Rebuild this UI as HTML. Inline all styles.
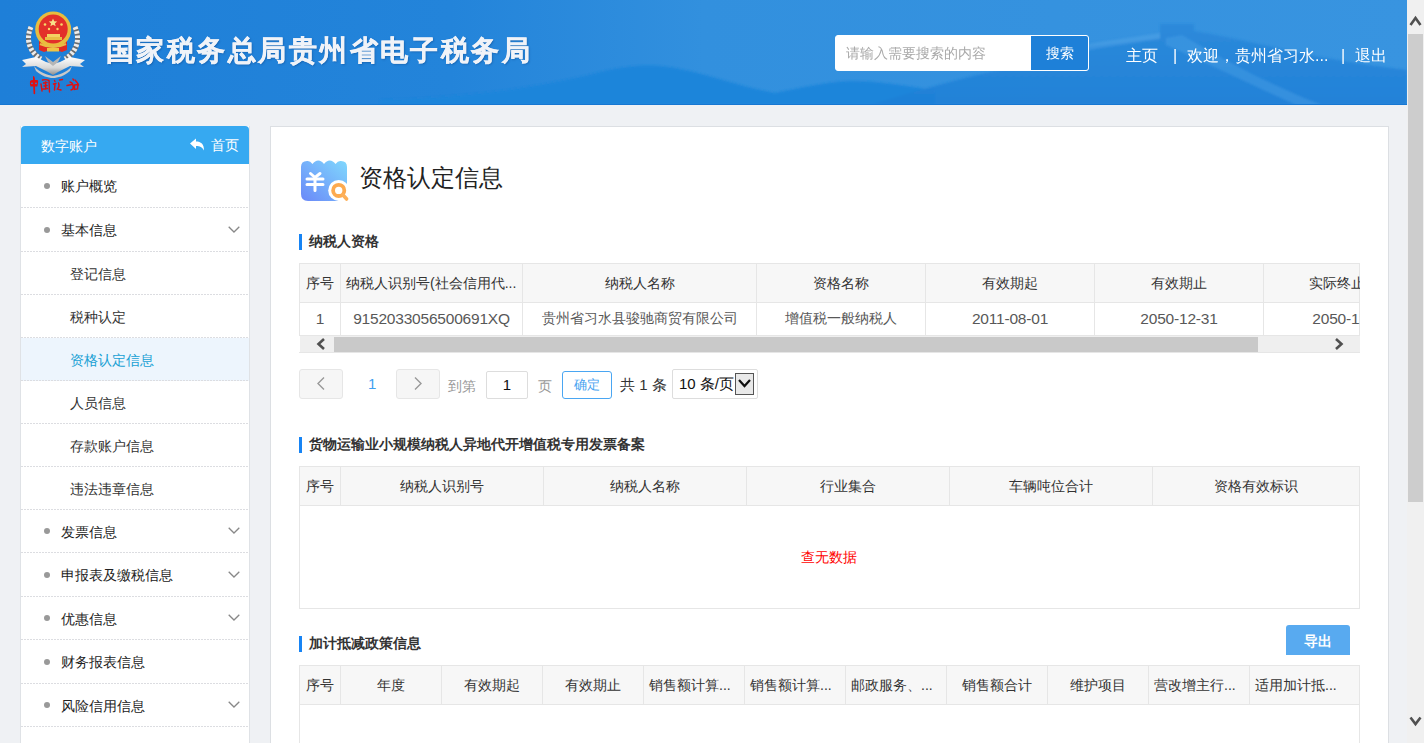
<!DOCTYPE html><html><head><meta charset="utf-8"><style>
*{box-sizing:border-box;margin:0;padding:0}
html,body{width:1424px;height:743px;overflow:hidden}
body{background:#eff1f4;font-family:"Liberation Sans",sans-serif;color:#333;position:relative}
.abs{position:absolute}
.hl{left:0;height:1px;background:#e6e6e6}
.vl{top:0;width:1px;background:#e6e6e6}
.th,.td{font-size:14px;color:#333;text-align:center;white-space:nowrap;overflow:hidden}
.td{color:#585858}
#hdr{left:0;top:0;width:1407px;height:105px;background:linear-gradient(90deg,#1e7ed8 0%,#2283dc 35%,#3592e2 70%,#2f8de0 100%);overflow:hidden}
#title{left:106px;top:32px;-webkit-text-stroke:.4px #f0f3f8;font-size:28px;font-weight:bold;color:#f0f3f8;letter-spacing:2.45px;white-space:nowrap;text-shadow:1px 1px 2px rgba(0,40,100,.35)}
.nav{top:47px;font-size:16px;color:#fff;white-space:nowrap;line-height:18px}
.mi{position:absolute;left:21px;width:228px;font-size:14px;color:#222}
.mi:after{content:'';position:absolute;left:0;bottom:0;width:228px;height:1px;background:repeating-linear-gradient(90deg,#dcdde1 0 2px,transparent 2px 3px)}
.mi .t{position:absolute;white-space:nowrap}
.dot{position:absolute;left:23px;width:6px;height:6px;border-radius:50%;background:#999}
.sec{position:absolute;left:309px;font-size:14px;font-weight:bold;color:#333;white-space:nowrap;line-height:16px}
.bar{position:absolute;left:299px;width:3px;height:16px;background:#1784f4}
</style></head><body>
<div id="hdr" class="abs">
<svg class="abs" style="left:0;top:0" width="1407" height="105" viewBox="0 0 1407 105" preserveAspectRatio="none">
<defs>
<linearGradient id="hg" x1="0" y1="0" x2="1" y2="0"><stop offset="0" stop-color="#1e7fd8"/><stop offset=".32" stop-color="#2384da"/><stop offset=".5" stop-color="#3290de"/><stop offset="1" stop-color="#3894e0"/></linearGradient>
<filter id="bl" x="-5%" y="-20%" width="110%" height="140%"><feGaussianBlur stdDeviation="0.9"/></filter>
<linearGradient id="mg" x1="0" y1="0" x2="0" y2="1"><stop offset="0" stop-color="#2a88da"/><stop offset="1" stop-color="#1f7fd6"/></linearGradient>
</defs>
<rect width="1407" height="105" fill="url(#hg)"/>
<g filter="url(#bl)"><path d="M380 104 L380 100 C460 98 540 88 600 72 C625 66 640 65 660 66 C700 70 735 86 775 93 C800 88 825 82 850 81 C880 81 905 86 935 90 L935 105 L380 105Z" fill="#1f85da"/>
<path d="M870 105 C920 90 960 78 1000 70 C1040 60 1060 50 1090 46 L1160 38 L1160 24 L1194 24 L1194 31 C1230 37 1280 49 1320 57 C1360 64 1390 68 1407 70 L1407 105Z" fill="url(#mg)" opacity=".85"/>
<path d="M1040 56 C1060 50 1080 46 1100 42 L1160 33 L1160 39 L1100 48 C1080 52 1060 56 1045 60Z" fill="#5eabea" opacity=".35"/>
<path d="M1166 38 L1182 35 C1220 58 1270 85 1322 105 L1296 105 C1250 84 1205 62 1166 45Z" fill="#5eabea" opacity=".3"/>
</g>
<rect x="0" y="104" width="1407" height="1" fill="#1677d2"/>
</svg>
</div>
<svg class="abs" style="left:0;top:0" width="100" height="100" viewBox="0 0 100 100">
<defs><linearGradient id="sg" x1="0" y1="0" x2="0" y2="1"><stop offset="0" stop-color="#ffffff"/><stop offset=".6" stop-color="#d8d8d8"/><stop offset="1" stop-color="#8d8d8d"/></linearGradient></defs>
<path d="M31 27 C26 38 28 51 41 59" fill="none" stroke="#6d6d6d" stroke-width="5"/>
<path d="M31 27 C26 38 28 51 41 59" fill="none" stroke="#ececec" stroke-width="5" stroke-dasharray="2.6 1.8"/>
<path d="M75 27 C80 38 78 51 65 59" fill="none" stroke="#6d6d6d" stroke-width="5"/>
<path d="M75 27 C80 38 78 51 65 59" fill="none" stroke="#ececec" stroke-width="5" stroke-dasharray="2.6 1.8"/>
<path d="M39 41 L67 41 L67 50 L62 52 L53 49 L44 52 L39 50Z" fill="#e02a22"/>
<circle cx="53.2" cy="29.5" r="18" fill="#e8bd3e"/>
<circle cx="53.2" cy="29" r="14.5" fill="#e3302a"/>
<path d="M53 18.5 l1.2 2.8 3 .2-2.3 1.9.8 2.9-2.7-1.6-2.7 1.6.8-2.9-2.3-1.9 3-.2z" fill="#f8e08a"/>
<circle cx="45" cy="24.5" r="1.3" fill="#f8d868"/><circle cx="61.5" cy="24.5" r="1.3" fill="#f8d868"/><circle cx="49" cy="29" r="1.2" fill="#f8d868"/><circle cx="57.5" cy="29" r="1.2" fill="#f8d868"/>
<rect x="47" y="34" width="13" height="3" fill="#f4d063"/><rect x="45" y="37" width="17" height="3" fill="#e9bd45"/>
<path d="M40 44 Q53 50 66 44" fill="none" stroke="#e9bd45" stroke-width="2"/>
<rect x="47" y="48" width="12" height="3.5" fill="#f0c445"/>
<path d="M22 60 L36 57 L46 62 L53 64 L60 62 L70 57 L85 60 L80 64 L84 67 L70 66 L58 72 L53 75 L48 72 L36 66 L22 67 L26 64Z" fill="url(#sg)"/>
<path d="M34 66 C40 73 48 75 53 76 C58 75 66 73 72 66 L70 71 C64 76 58 78 53 78 C48 78 42 76 36 71Z" fill="#c9c9c9"/>
<path d="M45 56 L53 62 L61 56 L58 62 L53 66 L48 62Z" fill="#b5b5b5"/>
<g fill="#e01010">
<path d="M33 76 Q34.5 76 34.8 78 L35 80 L37.5 80 Q38.5 80.5 38 83 L37.3 86.5 L35 86.5 L35.2 93.5 Q34.5 94.8 33.6 93.8 L33.2 86.5 L30.5 86.5 Q29.6 84 30 81.2 Q30.5 80 33 80 Z"/>
</g>
<g fill="#2384da"><circle cx="32" cy="83.3" r=".9"/><circle cx="36" cy="83.3" r=".9"/></g>
<g fill="none" stroke="#e01010" stroke-linecap="round" stroke-width="1.4">
<path d="M41 84 L42 91 M42.5 80 Q46 79 49 80.5 L49.5 92 M43.5 83 L47 82.5 M44 86 L47 85.5 M43 89 L47.5 88.5 M45.5 82 L45.8 89"/>
<path d="M54.5 80.5 L55 81.5 M53.5 84 L56 83.5 M55 84 L54.5 90 M59.5 80 L62.5 79.5 M58.5 83 Q60 86 57.5 89 L61 90"/>
<path d="M67 85.5 L72 84.5 M73 79 L73.5 80 M70 82 Q74 83 73 89 L71 90 M75 80 Q77 82 78.5 85 M74.5 85 L78 84.5 L77.5 89 L74.5 89.5 Z"/>
</g>
</svg>
<div id="title" class="abs">国家税务总局贵州省电子税务局</div>
<div class="abs" style="left:835px;top:35px;width:254px;height:36px;background:#fff;border:1px solid #fff;border-radius:3px"></div>
<div class="abs" style="left:1031px;top:36px;width:57px;height:34px;background:#1e80d8;border-radius:0 2px 2px 0"></div>
<div class="abs" style="left:846px;top:45px;font-size:14px;color:#a9a9a9;line-height:16px;white-space:nowrap">请输入需要搜索的内容</div>
<div class="abs" style="left:1046px;top:45px;font-size:14px;color:#fff;line-height:16px;white-space:nowrap">搜索</div>
<div class="abs nav" style="left:1126px">主页</div>
<div class="abs nav" style="left:1173px">|</div>
<div class="abs nav" style="left:1187px">欢迎，贵州省习水...</div>
<div class="abs nav" style="left:1341px">|</div>
<div class="abs nav" style="left:1355px">退出</div>
<div class="abs" style="left:1407px;top:0;width:17px;height:743px;background:#f0f0f0"></div>
<div class="abs" style="left:1408px;top:34px;width:15px;height:468px;background:#cdcdcd"></div>
<svg class="abs" style="left:1407px;top:14px" width="17" height="14"><path d="M3.5 11 L8.5 4 L13.5 11" fill="none" stroke="#505050" stroke-width="2.6"/></svg>
<svg class="abs" style="left:1407px;top:714px" width="17" height="14"><path d="M3.5 3.5 L8.5 10 L13.5 3.5" fill="none" stroke="#505050" stroke-width="2.6"/></svg>
<div class="abs" style="left:20px;top:126px;width:230px;height:640px;background:#fff;border-left:1px solid #dfe2e6;border-right:1px solid #dfe2e6"></div>
<div class="abs" style="left:21px;top:126px;width:228px;height:38px;background:#36a9f1;border-radius:4px 4px 0 0"></div>
<div class="abs" style="left:41px;top:138px;font-size:14px;color:#fff;line-height:16px;white-space:nowrap">数字账户</div>
<div class="abs" style="left:211px;top:137px;font-size:14px;color:#fff;line-height:16px;white-space:nowrap">首页</div>
<svg class="abs" style="left:189px;top:138px" width="16" height="13" viewBox="0 0 16 13"><path d="M1 5.5 L7 0.5 L7 3.5 C12 3.5 15 6 15 12.5 C13 9 11 8 7 8 L7 11 Z" fill="#fff"/></svg>
<div class="mi" style="top:164px;height:44px;">
<div class="dot" style="top:18.5px"></div>
<div class="t" style="left:40px;top:14.0px;line-height:16px">账户概览</div>
</div>
<div class="mi" style="top:208px;height:44px;">
<div class="dot" style="top:18.5px"></div>
<div class="t" style="left:40px;top:14.0px;line-height:16px">基本信息</div>
<svg class="abs" style="left:207px;top:17.5px" width="12" height="8"><path d="M0.7 0.7 L6 6 L11.3 0.7" fill="none" stroke="#888" stroke-width="1.3"/></svg>
</div>
<div class="mi" style="top:252px;height:43px;">
<div class="t" style="left:49px;top:13.5px;line-height:16px;color:#333">登记信息</div>
</div>
<div class="mi" style="top:295px;height:43px;">
<div class="t" style="left:49px;top:13.5px;line-height:16px;color:#333">税种认定</div>
</div>
<div class="mi" style="top:338px;height:43px;background:#edf5fd;">
<div class="t" style="left:49px;top:13.5px;line-height:16px;color:#17a0d4">资格认定信息</div>
</div>
<div class="mi" style="top:381px;height:43px;">
<div class="t" style="left:49px;top:13.5px;line-height:16px;color:#333">人员信息</div>
</div>
<div class="mi" style="top:424px;height:43px;">
<div class="t" style="left:49px;top:13.5px;line-height:16px;color:#333">存款账户信息</div>
</div>
<div class="mi" style="top:467px;height:43px;">
<div class="t" style="left:49px;top:13.5px;line-height:16px;color:#333">违法违章信息</div>
</div>
<div class="mi" style="top:510px;height:43px;">
<div class="dot" style="top:18.0px"></div>
<div class="t" style="left:40px;top:13.5px;line-height:16px">发票信息</div>
<svg class="abs" style="left:207px;top:17.0px" width="12" height="8"><path d="M0.7 0.7 L6 6 L11.3 0.7" fill="none" stroke="#888" stroke-width="1.3"/></svg>
</div>
<div class="mi" style="top:553px;height:44px;">
<div class="dot" style="top:18.5px"></div>
<div class="t" style="left:40px;top:14.0px;line-height:16px">申报表及缴税信息</div>
<svg class="abs" style="left:207px;top:17.5px" width="12" height="8"><path d="M0.7 0.7 L6 6 L11.3 0.7" fill="none" stroke="#888" stroke-width="1.3"/></svg>
</div>
<div class="mi" style="top:597px;height:43px;">
<div class="dot" style="top:18.0px"></div>
<div class="t" style="left:40px;top:13.5px;line-height:16px">优惠信息</div>
<svg class="abs" style="left:207px;top:17.0px" width="12" height="8"><path d="M0.7 0.7 L6 6 L11.3 0.7" fill="none" stroke="#888" stroke-width="1.3"/></svg>
</div>
<div class="mi" style="top:640px;height:44px;">
<div class="dot" style="top:18.5px"></div>
<div class="t" style="left:40px;top:14.0px;line-height:16px">财务报表信息</div>
</div>
<div class="mi" style="top:684px;height:43px;">
<div class="dot" style="top:18.0px"></div>
<div class="t" style="left:40px;top:13.5px;line-height:16px">风险信用信息</div>
<svg class="abs" style="left:207px;top:17.0px" width="12" height="8"><path d="M0.7 0.7 L6 6 L11.3 0.7" fill="none" stroke="#888" stroke-width="1.3"/></svg>
</div>
<div class="mi" style="top:727px;height:60px;">
</div>
<div class="abs" style="left:270px;top:126px;width:1119px;height:640px;background:#fff;border:1px solid #dcdfe3"></div>
<svg class="abs" style="left:300px;top:159px" width="50" height="44" viewBox="0 0 50 44">
<defs><linearGradient id="ig" x1="0" y1="1" x2="1" y2="0"><stop offset="0" stop-color="#6a88f8"/><stop offset="1" stop-color="#80d8fd"/></linearGradient></defs>
<path d="M1 8 Q1 2 7 2 Q10 1.5 12.5 5 Q15 1.5 18.25 1.5 Q21.5 1.5 24 5 Q26.5 1.5 29.75 1.5 Q33 1.5 35.5 5 Q38 1.5 41 2 Q47 2 47 8 L47 33 L38 42 L8 42 Q1 42 1 35Z" fill="url(#ig)"/>
<g fill="none" stroke="#fff" stroke-width="3" stroke-linecap="round" stroke-linejoin="round">
<path d="M10.5 14.5 L15 18.5 L20 14.5"/><path d="M7 20 L23 20 M7 25.5 L23 25.5 M15 18.5 L15 31.5"/>
</g>
<circle cx="38.7" cy="31.4" r="10.5" fill="#fff"/>
<circle cx="38.7" cy="31.4" r="5.6" fill="none" stroke="#fdaa50" stroke-width="3.8"/>
<path d="M43 36 L46.6 40" stroke="#fdb05a" stroke-width="3.6" stroke-linecap="round"/>
</svg>
<div class="abs" style="left:359px;top:164px;font-size:24px;color:#222;line-height:28px;white-space:nowrap">资格认定信息</div>
<div class="bar" style="top:234px"></div><div class="sec" style="top:233px">纳税人资格</div>
<div class="abs" style="left:299px;top:263px;width:1061px;height:90px;overflow:hidden">
<div class="abs" style="left:0;top:0;width:1061px;height:39px;background:#f7f7f7"></div>
<div class="abs hl" style="top:0px;width:1061px"></div>
<div class="abs hl" style="top:39px;width:1061px"></div>
<div class="abs hl" style="top:72px;width:1061px"></div>
<div class="abs vl" style="left:0px;height:73px"></div>
<div class="abs vl" style="left:41px;height:73px"></div>
<div class="abs vl" style="left:223px;height:73px"></div>
<div class="abs vl" style="left:457px;height:73px"></div>
<div class="abs vl" style="left:626px;height:73px"></div>
<div class="abs vl" style="left:795px;height:73px"></div>
<div class="abs vl" style="left:964px;height:73px"></div>
<div class="abs vl" style="left:1060px;height:73px"></div>
<div class="abs th" style="left:1px;top:1px;width:40px;height:39px;line-height:39px;">序号</div>
<div class="abs th" style="left:42px;top:1px;width:181px;height:39px;line-height:39px;text-align:left;padding-left:5px;">纳税人识别号(社会信用代...</div>
<div class="abs th" style="left:224px;top:1px;width:233px;height:39px;line-height:39px;">纳税人名称</div>
<div class="abs th" style="left:458px;top:1px;width:168px;height:39px;line-height:39px;">资格名称</div>
<div class="abs th" style="left:627px;top:1px;width:168px;height:39px;line-height:39px;">有效期起</div>
<div class="abs th" style="left:796px;top:1px;width:168px;height:39px;line-height:39px;">有效期止</div>
<div class="abs th" style="left:965px;top:1px;width:174px;height:39px;line-height:39px;">实际终止日期</div>
<div class="abs td" style="left:1px;top:39px;width:40px;height:33px;line-height:33px;font-size:15.5px;letter-spacing:-0.2px;">1</div>
<div class="abs td" style="left:42px;top:39px;width:181px;height:33px;line-height:33px;font-size:15.5px;letter-spacing:-0.2px;">9152033056500691XQ</div>
<div class="abs td" style="left:224px;top:39px;width:233px;height:33px;line-height:33px;">贵州省习水县骏驰商贸有限公司</div>
<div class="abs td" style="left:458px;top:39px;width:168px;height:33px;line-height:33px;">增值税一般纳税人</div>
<div class="abs td" style="left:627px;top:39px;width:168px;height:33px;line-height:33px;font-size:15.5px;letter-spacing:-0.2px;">2011-08-01</div>
<div class="abs td" style="left:796px;top:39px;width:168px;height:33px;line-height:33px;font-size:15.5px;letter-spacing:-0.2px;">2050-12-31</div>
<div class="abs td" style="left:965px;top:39px;width:174px;height:33px;line-height:33px;font-size:15.5px;letter-spacing:-0.2px;">2050-12-31</div>
<div class="abs" style="left:1px;top:73px;width:1060px;height:16px;background:#efefef"></div>
<div class="abs" style="left:35px;top:74px;width:924px;height:15px;background:#c9c9c9"></div>
<svg class="abs" style="left:17px;top:75px" width="10" height="12"><path d="M8 1 L2.5 6 L8 11" fill="none" stroke="#505050" stroke-width="2.6"/></svg>
<svg class="abs" style="left:1035px;top:75px" width="10" height="12"><path d="M2 1 L7.5 6 L2 11" fill="none" stroke="#505050" stroke-width="2.6"/></svg>
<div class="abs hl" style="top:89px;width:1061px"></div>
</div>
<div class="abs" style="left:299px;top:369px;width:44px;height:30px;background:#f6f6f6;border:1px solid #e6e6e6;border-radius:3px"></div>
<svg class="abs" style="left:316px;top:376px" width="10" height="16"><path d="M8 1.5 L2 7.5 L8 13.5" fill="none" stroke="#999" stroke-width="1.4"/></svg>
<div class="abs" style="left:368px;top:376px;font-size:15px;color:#40a0f0;line-height:16px">1</div>
<div class="abs" style="left:396px;top:369px;width:44px;height:30px;background:#f6f6f6;border:1px solid #e6e6e6;border-radius:3px"></div>
<svg class="abs" style="left:413px;top:376px" width="10" height="16"><path d="M2 1.5 L8 7.5 L2 13.5" fill="none" stroke="#999" stroke-width="1.4"/></svg>
<div class="abs" style="left:448px;top:378px;font-size:14px;color:#999;line-height:16px;white-space:nowrap">到第</div>
<div class="abs" style="left:486px;top:371px;width:42px;height:28px;background:#fff;border:1px solid #ddd;border-radius:2px;font-size:15px;color:#111;text-align:center;line-height:26px">1</div>
<div class="abs" style="left:538px;top:378px;font-size:14px;color:#999;line-height:16px">页</div>
<div class="abs" style="left:562px;top:371px;width:50px;height:28px;background:#fff;border:1px solid #4aa6f2;border-radius:3px;font-size:13px;color:#46a2f0;text-align:center;line-height:26px">确定</div>
<div class="abs" style="left:620px;top:377px;font-size:15px;color:#333;line-height:16px;white-space:nowrap">共 1 条</div>
<div class="abs" style="left:672px;top:369px;width:86px;height:30px;background:#fff;border:1px solid #ddd;border-radius:2px"></div>
<div class="abs" style="left:679px;top:376px;font-size:15px;color:#111;line-height:16px;white-space:nowrap">10 条/页</div>
<div class="abs" style="left:735px;top:373px;width:19px;height:22px;background:#e9e9e9;border:1px solid #555"></div>
<svg class="abs" style="left:736px;top:378px" width="17" height="12"><path d="M3 2 L8.5 8 L14 2" fill="none" stroke="#111" stroke-width="2.2"/></svg>
<div class="bar" style="top:437px"></div><div class="sec" style="top:436px">货物运输业小规模纳税人异地代开增值税专用发票备案</div>
<div class="abs" style="left:299px;top:466px;width:1061px;height:143px;overflow:hidden">
<div class="abs" style="left:0;top:0;width:1061px;height:39px;background:#f7f7f7"></div>
<div class="abs hl" style="top:0px;width:1061px"></div>
<div class="abs hl" style="top:39px;width:1061px"></div>
<div class="abs hl" style="top:142px;width:1061px"></div>
<div class="abs vl" style="left:0px;height:143px"></div>
<div class="abs vl" style="left:41px;height:40px"></div>
<div class="abs vl" style="left:244px;height:40px"></div>
<div class="abs vl" style="left:447px;height:40px"></div>
<div class="abs vl" style="left:650px;height:40px"></div>
<div class="abs vl" style="left:853px;height:40px"></div>
<div class="abs vl" style="left:1060px;height:143px"></div>
<div class="abs th" style="left:1px;top:1px;width:40px;height:39px;line-height:39px;">序号</div>
<div class="abs th" style="left:42px;top:1px;width:202px;height:39px;line-height:39px;">纳税人识别号</div>
<div class="abs th" style="left:245px;top:1px;width:202px;height:39px;line-height:39px;">纳税人名称</div>
<div class="abs th" style="left:448px;top:1px;width:202px;height:39px;line-height:39px;">行业集合</div>
<div class="abs th" style="left:651px;top:1px;width:202px;height:39px;line-height:39px;">车辆吨位合计</div>
<div class="abs th" style="left:854px;top:1px;width:206px;height:39px;line-height:39px;">资格有效标识</div>
<div class="abs" style="left:502px;top:83px;font-size:14px;color:#f00;line-height:16px;white-space:nowrap">查无数据</div>
</div>
<div class="bar" style="top:636px"></div><div class="sec" style="top:635px">加计抵减政策信息</div>
<div class="abs" style="left:1286px;top:625px;width:64px;height:30px;background:#58aaf0;border-radius:3px 3px 0 0;color:#fff;font-size:14px;font-weight:bold;text-align:center;line-height:32px">导出</div>
<div class="abs" style="left:299px;top:665px;width:1061px;height:136px;overflow:hidden">
<div class="abs" style="left:0;top:0;width:1061px;height:39px;background:#f7f7f7"></div>
<div class="abs hl" style="top:0px;width:1061px"></div>
<div class="abs hl" style="top:39px;width:1061px"></div>
<div class="abs hl" style="top:135px;width:1061px"></div>
<div class="abs vl" style="left:0px;height:136px"></div>
<div class="abs vl" style="left:41px;height:40px"></div>
<div class="abs vl" style="left:142px;height:40px"></div>
<div class="abs vl" style="left:243px;height:40px"></div>
<div class="abs vl" style="left:344px;height:40px"></div>
<div class="abs vl" style="left:445px;height:40px"></div>
<div class="abs vl" style="left:546px;height:40px"></div>
<div class="abs vl" style="left:647px;height:40px"></div>
<div class="abs vl" style="left:748px;height:40px"></div>
<div class="abs vl" style="left:849px;height:40px"></div>
<div class="abs vl" style="left:950px;height:40px"></div>
<div class="abs vl" style="left:1060px;height:136px"></div>
<div class="abs th" style="left:1px;top:1px;width:40px;height:39px;line-height:39px;">序号</div>
<div class="abs th" style="left:42px;top:1px;width:100px;height:39px;line-height:39px;">年度</div>
<div class="abs th" style="left:143px;top:1px;width:100px;height:39px;line-height:39px;">有效期起</div>
<div class="abs th" style="left:244px;top:1px;width:100px;height:39px;line-height:39px;">有效期止</div>
<div class="abs th" style="left:345px;top:1px;width:100px;height:39px;line-height:39px;text-align:left;padding-left:5px;">销售额计算...</div>
<div class="abs th" style="left:446px;top:1px;width:100px;height:39px;line-height:39px;text-align:left;padding-left:5px;">销售额计算...</div>
<div class="abs th" style="left:547px;top:1px;width:100px;height:39px;line-height:39px;text-align:left;padding-left:5px;">邮政服务、...</div>
<div class="abs th" style="left:648px;top:1px;width:100px;height:39px;line-height:39px;">销售额合计</div>
<div class="abs th" style="left:749px;top:1px;width:100px;height:39px;line-height:39px;">维护项目</div>
<div class="abs th" style="left:850px;top:1px;width:100px;height:39px;line-height:39px;text-align:left;padding-left:5px;">营改增主行...</div>
<div class="abs th" style="left:951px;top:1px;width:109px;height:39px;line-height:39px;text-align:left;padding-left:5px;">适用加计抵...</div>

</div>
</body></html>
